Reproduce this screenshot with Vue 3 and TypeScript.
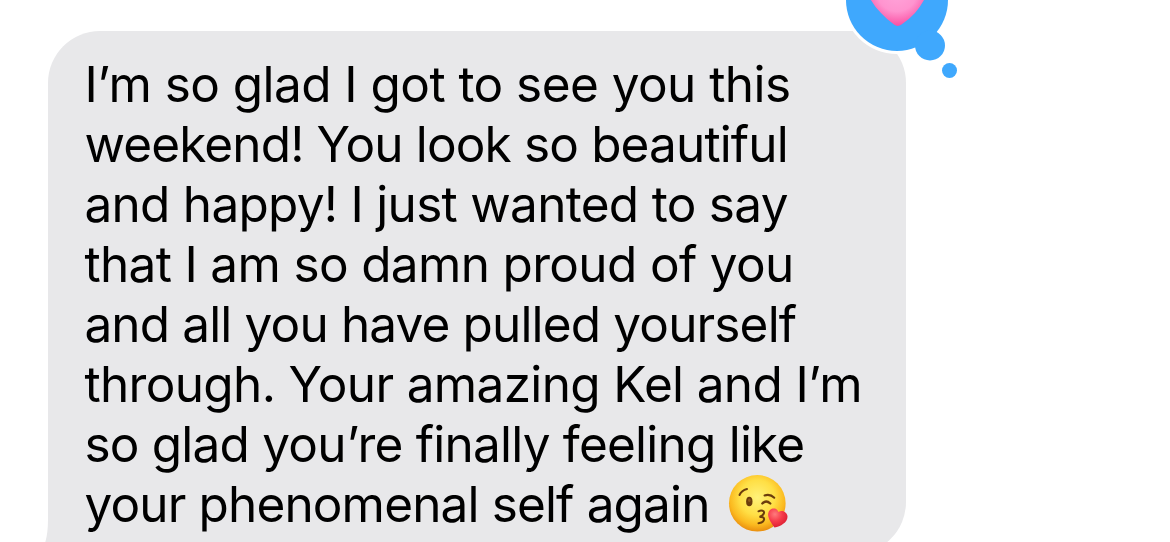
<script setup lang="ts">
interface Line {
  text: string
  spacing: number
}

const lines: Line[] = [
  { text: 'I’m so glad I got to see you this', spacing: -0.55 },
  { text: 'weekend! You look so beautiful', spacing: -0.86 },
  { text: 'and happy! I just wanted to say', spacing: -0.71 },
  { text: 'that I am so damn proud of you', spacing: -0.66 },
  { text: 'and all you have pulled yourself', spacing: -0.85 },
  { text: 'through. Your amazing Kel and I’m', spacing: -0.65 },
  { text: 'so glad you’re finally feeling like', spacing: -0.78 },
  { text: 'your phenomenal self again', spacing: -0.85 },
]
</script>

<template>
  <main class="conversation">
    <article class="bubble">
      <p class="message">
        <span v-for="(line, i) in lines" :key="i" class="line">
          <span :style="{ letterSpacing: line.spacing + 'px' }">{{ line.text }}</span>
          <svg v-if="i === lines.length - 1" class="kiss" viewBox="0 0 60 60" aria-label="Face blowing a kiss">
            <defs>
              <radialGradient id="face" cx="0.5" cy="0.4" r="0.62">
                <stop offset="0" stop-color="#fff27a" />
                <stop offset="0.5" stop-color="#ffdf45" />
                <stop offset="0.78" stop-color="#fbb91f" />
                <stop offset="1" stop-color="#e6860c" />
              </radialGradient>
              <radialGradient id="kissHeart" cx="0.35" cy="0.3" r="0.75">
                <stop offset="0" stop-color="#ff7b7d" />
                <stop offset="0.5" stop-color="#f63b4a" />
                <stop offset="1" stop-color="#d91b31" />
              </radialGradient>
            </defs>
            <circle cx="29.3" cy="29.3" r="28.3" fill="url(#face)" />
            <g fill="none" stroke="#6b3c0c" stroke-linecap="round">
              <path d="M11.500 21Q13.500 16.500 19 15" stroke-width="2" />
              <path d="M36.500 21.500Q42 19.500 46.300 23.800" stroke-width="2" />
              <path d="M34.300 29.500Q38 25.500 42.300 29.500" stroke-width="2.300" />
              <path d="M30.500 37.300C33.500 35.800 36.500 36.800 36 39C35.600 41.200 33.500 42.300 31.500 43C34.500 42.600 36.500 43.600 36 45.800C35.400 48.300 33 49 30.500 49.200" stroke-width="2" />
            </g>
            <ellipse cx="21.300" cy="27.500" rx="3.200" ry="4.700" fill="#6b3c0c" />
            <ellipse cx="21.300" cy="26.300" rx="1.300" ry="1.800" fill="#8f5a1a" />
            <path d="M46.500 53.500C43.500 49.500 39.500 44 40.200 39.500C41 34 48.500 32.500 50.500 38C54.500 35.500 59.500 38.500 59.500 42.800C59.500 48.500 52.500 52.500 46.500 53.500Z" fill="url(#kissHeart)" />
          </svg>
        </span>
      </p>
      <svg class="tail" viewBox="0 0 10 24" aria-hidden="true">
        <path d="M10 0H3Q3 15 0 24H10Z" fill="#e8e8ea" />
      </svg>
      <svg class="reaction" viewBox="0 0 120 90" aria-label="Heart reaction">
        <defs>
          <radialGradient id="pinkHeart" gradientUnits="userSpaceOnUse" cx="57" cy="-9" r="37">
            <stop offset="0" stop-color="#ffa6db" />
            <stop offset="0.550" stop-color="#ff94cf" />
            <stop offset="1" stop-color="#fa459c" />
          </radialGradient>
        </defs>
        <circle cx="57" cy="0" r="54" fill="#fff" />
        <g fill="#3fa8fd">
          <circle cx="57" cy="0" r="51" />
          <circle cx="90" cy="45.500" r="15" />
          <circle cx="109.500" cy="70.500" r="7.500" />
        </g>
        <path d="M28 -6Q32 4 41 13Q47 19.500 54 24.600Q57.700 27.400 61.500 24.600Q69 19.500 75 13Q82 5 87 -6Z" fill="url(#pinkHeart)" />
      </svg>
    </article>
  </main>
</template>

<style>
body {
  margin: 0;
  background: #fff;
}
</style>

<style scoped>
.conversation {
  box-sizing: border-box;
  width: 1170px;
  height: 542px;
  padding: 31px 0 0 48px;
  overflow: hidden;
  background: #fff;
}

.bubble {
  position: relative;
  box-sizing: border-box;
  width: 858px;
  height: 523px;
  padding: 23px 0 0 36.4px;
  border-radius: 52px 52px 52px 0;
  background: #e8e8ea;
}

.message {
  margin: 0;
  color: #000;
  font-family: Inter, "Liberation Sans", sans-serif;
  font-size: 49.5px;
  font-weight: 400;
  line-height: 60px;
}

.line {
  display: flex;
  align-items: center;
  height: 60px;
  white-space: nowrap;
}

.kiss {
  width: 60px;
  height: 60px;
  flex: none;
  margin-left: 18.8px;
}

.tail {
  position: absolute;
  left: -3px;
  top: 488px;
  width: 10px;
  height: 24px;
}

.reaction {
  position: absolute;
  left: 792px;
  top: -31px;
  width: 120px;
  height: 90px;
}
</style>
